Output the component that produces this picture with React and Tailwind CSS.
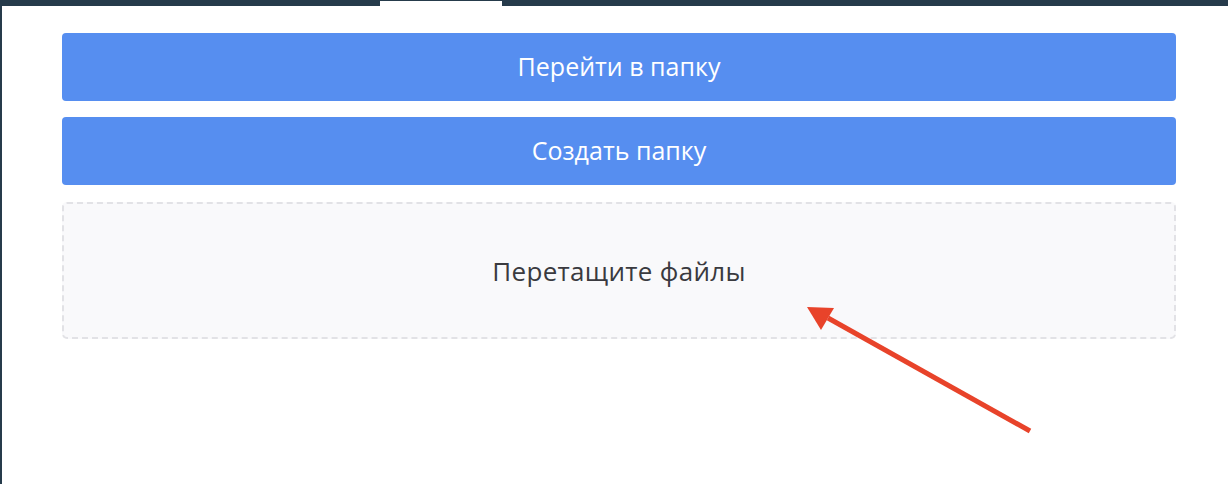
export default function App() {
  return (
    <div className="relative w-[1228px] h-[484px] bg-white border-l-2 border-[#263b4b] overflow-hidden" style={{ fontFamily: '"Open Sans", "Noto Sans", sans-serif' }}>
      <div className="flex h-[6px] bg-[#263b4b]">
        <div className="w-[378px]" />
        <div className="w-[122px] mt-[1px] bg-white" />
        <div className="flex-1" />
      </div>
      <div className="flex flex-col gap-[16px] pl-[60px] pr-[52px] pt-[27px]">
        <button className="h-[68px] w-full rounded-[4px] bg-[#568ef0] text-white text-[25px] leading-none pb-[2px]">
          Перейти в папку
        </button>
        <button className="h-[68px] w-full rounded-[4px] bg-[#568ef0] text-white text-[25px] leading-none pb-[2px]">
          Создать папку
        </button>
        <div className="mt-[1px] h-[137px] w-full rounded-[5px] border-2 border-dashed border-[#e2e2e6] bg-[#f9f9fb] flex items-center justify-center text-[#3a3a3f] text-[26px] tracking-[0.3px] leading-none">
          Перетащите файлы
        </div>
      </div>
      <svg className="absolute left-0 top-0 pointer-events-none" width="1228" height="484" viewBox="0 0 1228 484">
        <line x1="1028" y1="431" x2="826" y2="318" stroke="#e8432a" strokeWidth="5" />
        <polygon points="805,307 832,308 819,330" fill="#e8432a" />
      </svg>
    </div>
  );
}
